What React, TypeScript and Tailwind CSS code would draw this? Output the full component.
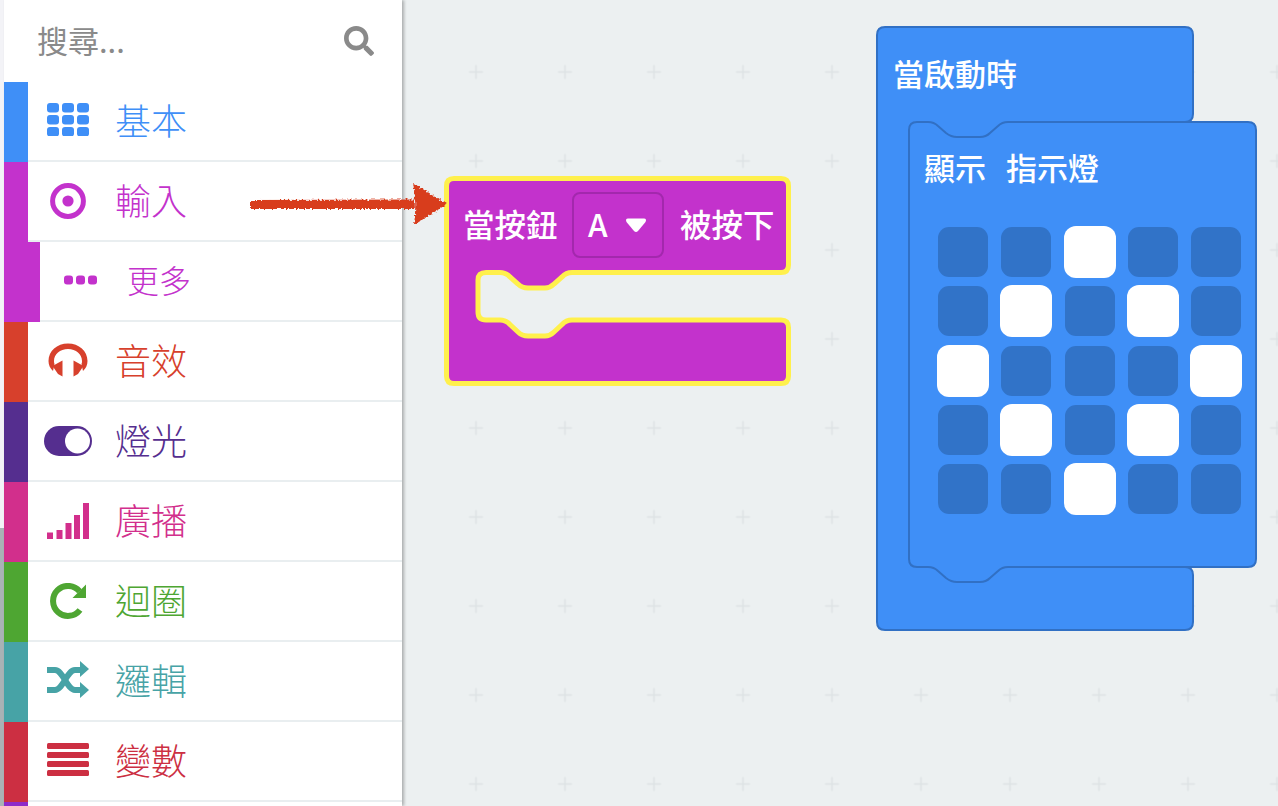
import type { ReactNode } from 'react'
import { FaSearch } from 'react-icons/fa'

const GridIcon = () => (
  <svg className="-mt-[3px]" width="42" height="33" viewBox="0 0 42 33" fill="currentColor">
    {[0, 15, 30].map((x) =>
      [0, 12, 24].map((y) => <rect key={`${x}-${y}`} x={x} y={y} width="12" height="9.5" rx="3" />)
    )}
  </svg>
)

const TargetIcon = () => (
  <svg width="36" height="36" viewBox="0 0 36 36" fill="currentColor">
    <circle cx="18" cy="18" r="15.4" fill="none" stroke="currentColor" strokeWidth="5" />
    <circle cx="18" cy="18" r="5.6" />
  </svg>
)

const DotsIcon = () => (
  <svg className="-mt-[3px]" width="33" height="10" viewBox="0 0 33 10" fill="currentColor">
    {[0, 12, 24].map((x) => <rect key={x} x={x} y="0.5" width="9" height="9" rx="3" />)}
  </svg>
)

const HeadphonesIcon = () => (
  <svg className="-mt-[3px]" width="40" height="34" viewBox="0 0 40 34" fill="currentColor">
    <path d="M5 28 C2 25 0.5 22 0.5 18 C0.5 8 9 0.5 20 0.5 C31 0.5 39.5 8 39.5 18 C39.5 22 38 25 35 28 L33.5 21 C34 20 34 19 34 18 C34 11 28 6 20 6 C12 6 6 11 6 18 C6 19 6 20 6.5 21 Z" />
    <path d="M4.5 23 L14.5 17.5 V33.5 L10 31 Z" />
    <path d="M35.5 23 L25.5 17.5 V33.5 L30 31 Z" />
  </svg>
)

const ToggleIcon = () => (
  <svg width="48" height="30" viewBox="0 0 48 30">
    <rect width="48" height="30" rx="15" fill="currentColor" />
    <circle cx="33.5" cy="15" r="12.5" fill="#fff" />
  </svg>
)

const SignalIcon = () => (
  <svg width="42" height="36" viewBox="0 0 42 36" fill="currentColor">
    <rect x="0" y="29.5" width="6" height="6.5" />
    <rect x="9.5" y="27" width="6" height="9" />
    <rect x="18.5" y="20" width="6" height="16" />
    <rect x="27" y="12" width="6" height="24" />
    <rect x="36" y="0" width="6" height="36" />
  </svg>
)

const RepeatIcon = () => (
  <svg width="36" height="36" viewBox="0 0 36 36" fill="currentColor">
    <path d="M29.5 8.2 A15 15 0 1 0 30 27" fill="none" stroke="currentColor" strokeWidth="6" />
    <path d="M36 1.5 V15 H22.5 Z" />
  </svg>
)

const ShuffleIcon = () => (
  <svg className="-mt-[3px]" width="42" height="37" viewBox="0 0 42 37" fill="currentColor">
    <path
      d="M0 9 H8 C16 9 20 29 28 29 H34 M0 29 H8 C16 29 20 9 28 9 H34"
      fill="none"
      stroke="currentColor"
      strokeWidth="6"
    />
    <path d="M33 0 L42 8 L33 16 Z" />
    <path d="M33 21 L42 29 L33 37 Z" />
  </svg>
)

const BarsIcon = () => (
  <svg className="-mt-[3px]" width="42" height="33" viewBox="0 0 42 33" fill="currentColor">
    {[0, 9, 18, 27].map((y) => <rect key={y} y={y} width="42" height="6" rx="1.5" />)}
  </svg>
)

type RowProps = {
  label: string
  strip: string
  text: string
  icon: ReactNode
}

const CategoryRow = ({ label, strip, text, icon }: RowProps) => (
  <div className={`flex h-20 ${text}`}>
    <div className={`w-6 shrink-0 ${strip}`} />
    <div className="flex flex-1 items-center border-b-2 border-[#e9eef0]">
      <div className="flex w-20 justify-center">{icon}</div>
      <span className="-mt-1 ml-[7px] text-[36px] leading-none font-extralight">{label}</span>
    </div>
  </div>
)

const rows: RowProps[] = [
  { label: '音效', strip: 'bg-[#d7402c]', text: 'text-[#d7402c]', icon: <HeadphonesIcon /> },
  { label: '燈光', strip: 'bg-[#552e8f]', text: 'text-[#552e8f]', icon: <ToggleIcon /> },
  { label: '廣播', strip: 'bg-[#d22f8c]', text: 'text-[#d22f8c]', icon: <SignalIcon /> },
  { label: '迴圈', strip: 'bg-[#4ea632]', text: 'text-[#4ea632]', icon: <RepeatIcon /> },
  { label: '邏輯', strip: 'bg-[#47a3a6]', text: 'text-[#47a3a6]', icon: <ShuffleIcon /> },
  { label: '變數', strip: 'bg-[#cc2f42]', text: 'text-[#cc2f42]', icon: <BarsIcon /> },
]

const Toolbox = () => (
  <div className="z-[1] flex h-full w-[398px] shrink-0 flex-col bg-white shadow-[2px_0_3px_rgba(0,0,0,0.28)]">
    <div className="flex h-[82px] shrink-0 items-center justify-between pr-[28px] pl-[33px] text-[#8a8a8a]">
      <span className="-mt-1 text-[31px] leading-none">搜尋...</span>
      <FaSearch size={30} />
    </div>
    <CategoryRow label="基本" strip="bg-[#3f8ff7]" text="text-[#3f8ff7]" icon={<GridIcon />} />
    <CategoryRow label="輸入" strip="bg-[#c332cc]" text="text-[#c332cc]" icon={<TargetIcon />} />
    <div className="flex h-20 text-[#c332cc]">
      <div className="w-9 shrink-0 bg-[#c332cc]" />
      <div className="flex flex-1 items-center border-b-2 border-[#e9eef0]">
        <div className="flex w-[81px] justify-center">
          <DotsIcon />
        </div>
        <span className="-mt-1 ml-[6px] text-[32px] leading-none font-extralight">更多</span>
      </div>
    </div>
    {rows.map((row) => <CategoryRow key={row.label} {...row} />)}
    <div className="w-6 flex-1 bg-[#8e2bc9]" />
  </div>
)

const ButtonBlock = () => (
  <div className="absolute top-[176px] left-[42px] h-[210px] w-[347px]">
    <svg className="absolute inset-0" width="347" height="210" viewBox="444 176 347 210">
      <path
        d="M446.5 186 Q446.5 178.5 454 178.5 H781 Q788.5 178.5 788.5 186 V265 Q788.5 272.5 781 272.5 H572 Q566 272.5 562 277 L554 284 Q550 288 545 288 H528 Q522 288 518 284 L510 277 Q506 272.5 500 272.5 H486 Q478 272.5 478 280 V312 Q478 320 486 320 H500 Q506 320 510 324.5 L518 332 Q522 336 528 336 H545 Q550 336 554 332 L562 324.5 Q566 320 572 320 H781 Q788.5 320 788.5 327.5 V376 Q788.5 383.5 781 383.5 H454 Q446.5 383.5 446.5 376 Z"
        fill="#c332cc"
        stroke="#fff04c"
        strokeWidth="5"
      />
    </svg>
    <div className="relative flex items-start gap-4 pt-4 pl-[19px] text-[31.5px] leading-[62px] font-medium text-white">
      <span className="w-[92px] whitespace-nowrap">當按鈕</span>
      <div className="ml-px flex h-[66px] w-[92px] items-center gap-[17px] rounded-lg border-2 border-[#a328ad] pl-[14px]">
        <span className="-mt-1">A</span>
        <svg width="22" height="15" viewBox="0 0 22 15" fill="#fff">
          <path d="M3 0.5 H19 Q22 0.5 20.5 4 L13 13 Q11 15 9 13 L1.5 4 Q0 0.5 3 0.5 Z" />
        </svg>
      </div>
      <span className="w-[92px] whitespace-nowrap">被按下</span>
    </div>
  </div>
)

const leds = [
  0, 0, 1, 0, 0,
  0, 1, 0, 1, 0,
  1, 0, 0, 0, 1,
  0, 1, 0, 1, 0,
  0, 0, 1, 0, 0,
]

const ShowLeds = () => (
  <div className="absolute top-[94px] left-[31px] h-[464px] w-[351px]">
    <svg className="absolute inset-0" width="351" height="464" viewBox="907 120 351 464">
      <path
        d="M909 130 Q909 122 917 122 H928 Q934 122 938 126 L946 133 Q951 137 957 137 H980 Q986 137 990 133 L998 126 Q1002 122 1008 122 H1248 Q1256 122 1256 130 V559 Q1256 567 1248 567 H1008 Q1002 567 998 571 L990 578 Q986 582 980 582 H957 Q951 582 946 578 L938 571 Q934 567 928 567 H917 Q909 567 909 559 Z"
        fill="#3f8ff7"
        stroke="#3170c4"
        strokeWidth="2"
      />
    </svg>
    <div className="relative flex flex-col pt-[23px] pl-[17px]">
      <div className="flex gap-5 text-[31px] leading-[48px] font-medium text-white">
        <span>顯示</span>
        <span>指示燈</span>
      </div>
      <div className="mt-[36px] ml-[14px] grid grid-cols-[repeat(5,50px)] gap-x-[13.25px] gap-y-[9.25px]">
        {leds.map((on, i) =>
          on ? (
            <div key={i} className="-m-px h-[52px] w-[52px] rounded-xl bg-white" />
          ) : (
            <div key={i} className="h-[50px] w-[50px] rounded-[11px] bg-[#3173c8]" />
          )
        )}
      </div>
    </div>
  </div>
)

const StartBlock = () => (
  <div className="absolute top-[26px] left-[474px] h-[605px] w-[318px]">
    <svg className="absolute inset-0" width="318" height="605" viewBox="876 26 318 605">
      <path
        d="M885 27 H1185 Q1193 27 1193 35 V114 Q1193 122 1185 122 H1100 V567 H1185 Q1193 567 1193 575 V622 Q1193 630 1185 630 H885 Q877 630 877 622 V35 Q877 27 885 27 Z"
        fill="#3f8ff7"
        stroke="#3170c4"
        strokeWidth="2"
      />
    </svg>
    <div className="relative pt-[23px] pl-[17px] text-[31px] leading-[48px] font-medium text-white">當啟動時</div>
    <ShowLeds />
  </div>
)

// hand drawn arrow from the toolbox to the block
const Arrow = () => (
  <svg className="absolute top-[176px] left-[242px] z-10" width="214" height="58" viewBox="242 176 214 58">
    <defs>
      <filter id="rough" x="-5%" y="-20%" width="110%" height="140%">
        <feTurbulence type="fractalNoise" baseFrequency="0.5" numOctaves="3" seed="4" />
        <feDisplacementMap in="SourceGraphic" scale="5" xChannelSelector="R" yChannelSelector="G" />
      </filter>
    </defs>
    <g fill="#d83c1f" filter="url(#rough)">
      <path d="M250 200 L414 199.5 V209 L250 209 Z" />
      <path d="M413 183 L447 204 L414 225 Q417 204 413 183 Z" />
    </g>
  </svg>
)

const Workspace = () => (
  <div className="relative h-full flex-1 overflow-hidden bg-[#ecf0f1]">
    <svg className="absolute inset-0 h-full w-full">
      <defs>
        <pattern id="plus" x="29.5" y="27.5" width="89" height="89" patternUnits="userSpaceOnUse">
          <path d="M37.5 44.5 H51.5 M44.5 37.5 V51.5" stroke="#dde2e4" strokeWidth="1.5" />
        </pattern>
      </defs>
      <rect width="100%" height="100%" fill="url(#plus)" />
    </svg>
    <ButtonBlock />
    <StartBlock />
  </div>
)

export default function App() {
  return (
    <div className="relative flex h-[806px] w-[1278px] overflow-hidden bg-[#ecf0f1] font-['Noto_Sans_CJK_TC','Liberation_Sans',sans-serif]">
      <div className="flex h-full w-1 shrink-0 flex-col">
        <div className="h-[528px] bg-[#f3f3f7]" />
        <div className="flex-1 bg-[#a9b2b5]" />
      </div>
      <Toolbox />
      <Workspace />
      <Arrow />
    </div>
  )
}
